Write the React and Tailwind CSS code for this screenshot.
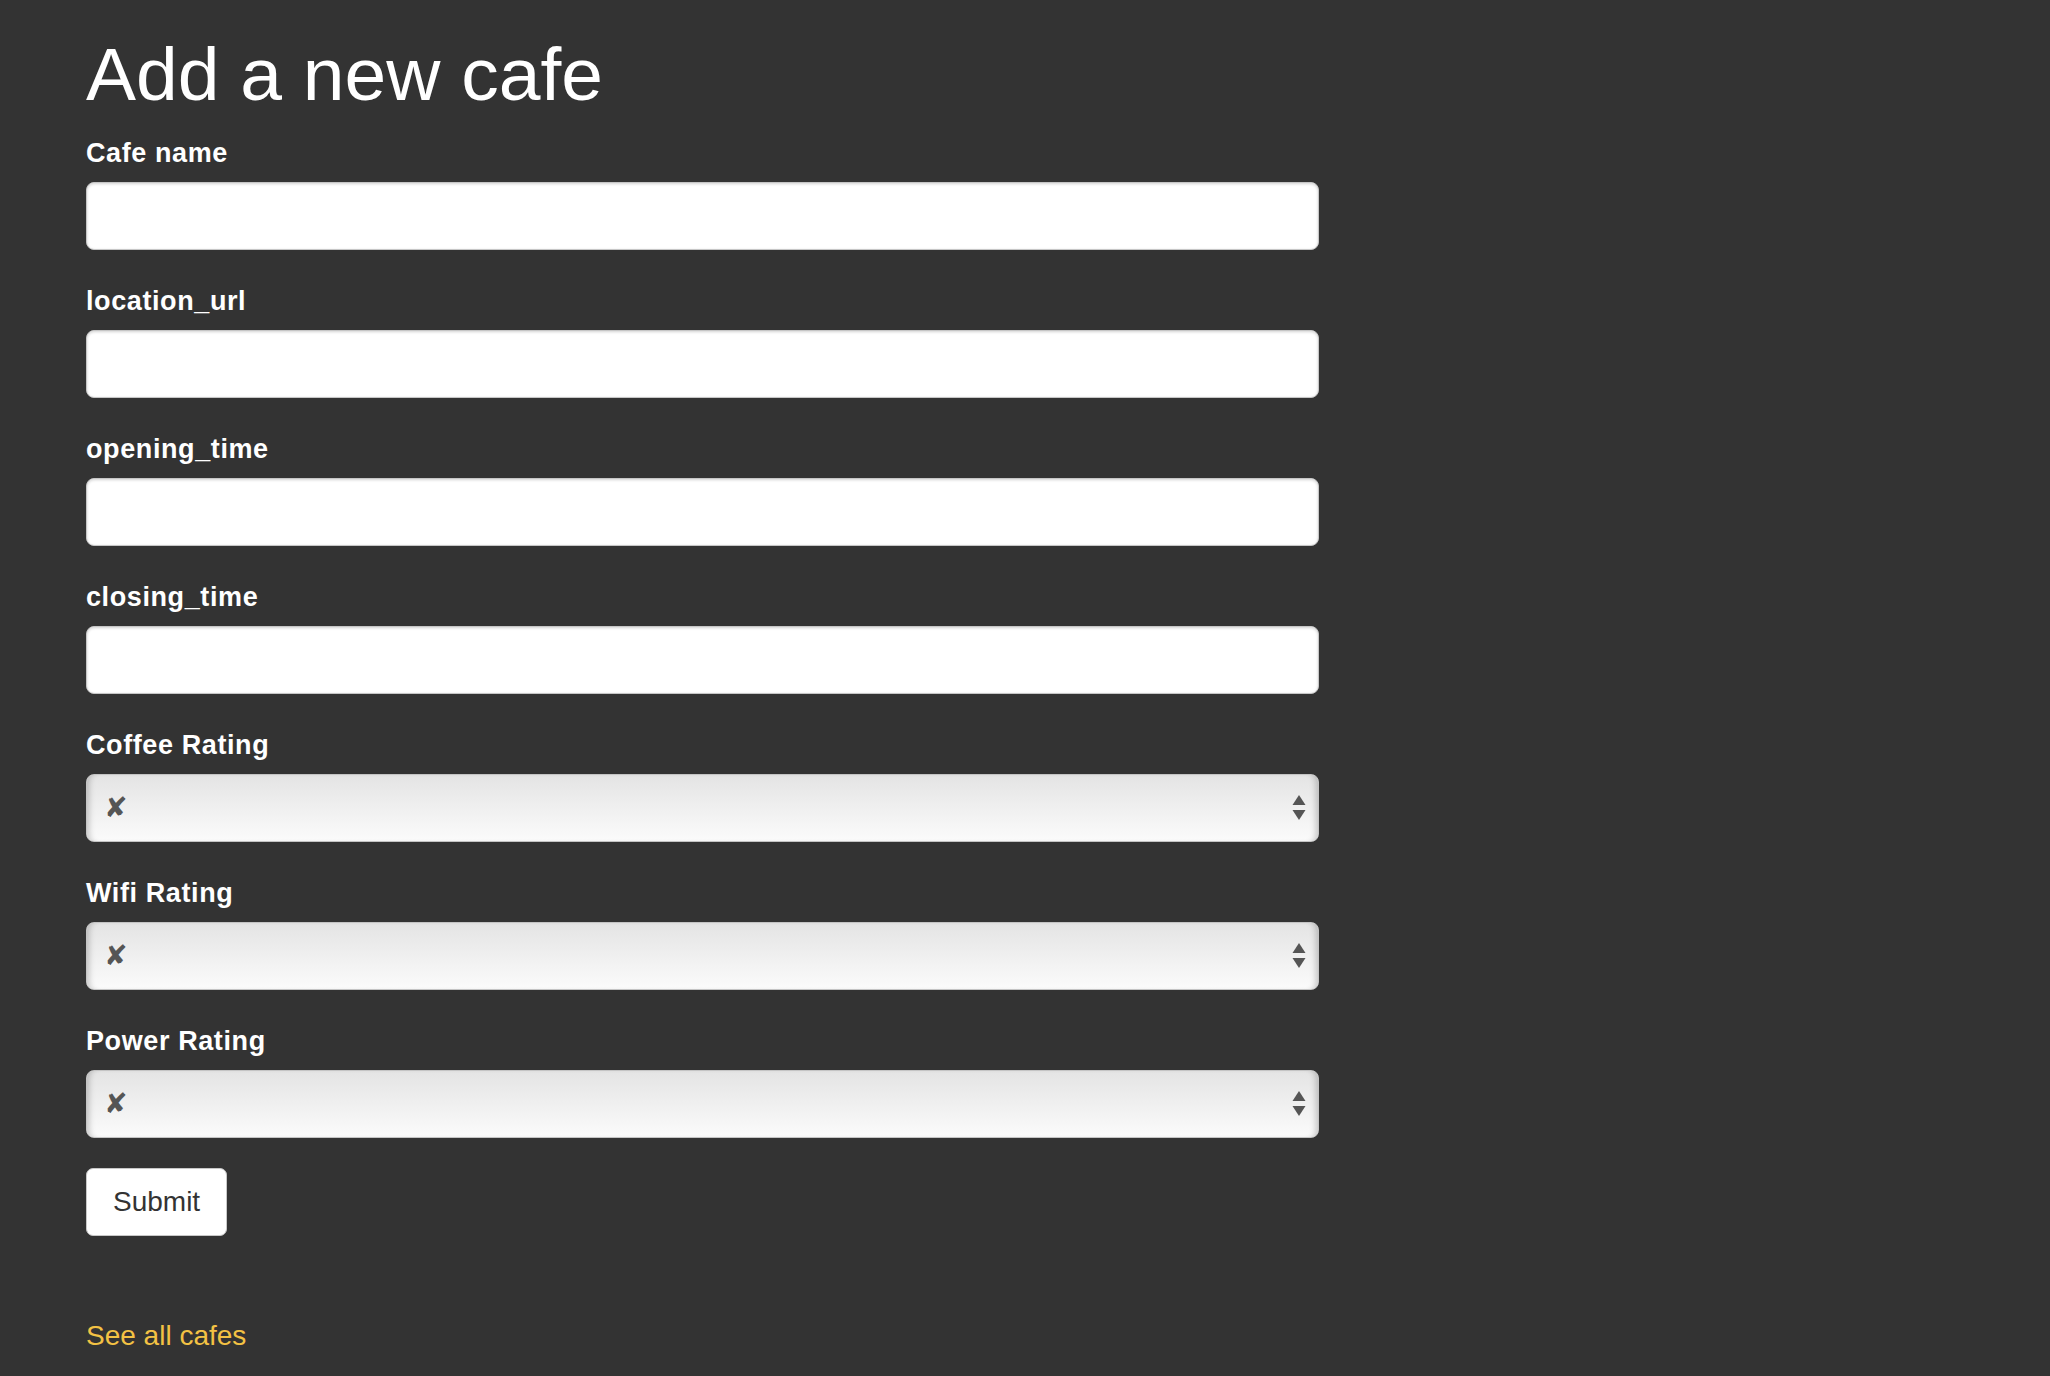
import React, { useState } from 'react';

const textFields = [
  { name: 'cafe', label: 'Cafe name' },
  { name: 'location_url', label: 'location_url' },
  { name: 'opening_time', label: 'opening_time' },
  { name: 'closing_time', label: 'closing_time' },
];

const ratingFields = [
  { name: 'coffee_rating', label: 'Coffee Rating' },
  { name: 'wifi_rating', label: 'Wifi Rating' },
  { name: 'power_rating', label: 'Power Rating' },
];

const ratingOptions = ['✘', '☕', '☕☕', '☕☕☕', '☕☕☕☕', '☕☕☕☕☕'];

const App = () => {
  const [formData, setFormData] = useState({
    cafe: '',
    location_url: '',
    opening_time: '',
    closing_time: '',
    coffee_rating: '✘',
    wifi_rating: '✘',
    power_rating: '✘',
  });

  // Manejar cambios en los campos
  const handleChange = (e) => {
    const { name, value } = e.target;
    setFormData({ ...formData, [name]: value });
  };

  return (
    <div
      className="min-h-screen bg-[#333333] pl-[86px] pt-[32px] pb-[18px] text-white"
      style={{ fontFamily: '"Liberation Sans", Arial, sans-serif' }}
    >
      <h1 className="text-[75px] leading-[84px] font-normal">Add a new cafe</h1>

      <form className="mt-[22px] w-[1233px]" onSubmit={(e) => e.preventDefault()}>
        <div className="flex flex-col gap-[36px]">
          {/* Campos de texto */}
          {textFields.map((field) => (
            <div key={field.name}>
              <label htmlFor={field.name} className="block text-[27px] leading-[30px] font-bold tracking-[0.6px] mb-[14px]">
                {field.label}
              </label>
              <input
                type="text"
                id={field.name}
                name={field.name}
                value={formData[field.name]}
                onChange={handleChange}
                className="block w-full h-[68px] rounded-[8px] border border-[#c6c6c6] bg-white px-4 text-[26px] text-[#333] shadow-[inset_0_1px_3px_rgba(0,0,0,0.18)] outline-none"
              />
            </div>
          ))}

          {/* Valoraciones */}
          {ratingFields.map((field) => (
            <div key={field.name}>
              <label htmlFor={field.name} className="block text-[27px] leading-[30px] font-bold tracking-[0.6px] mb-[14px]">
                {field.label}
              </label>
              <div className="relative">
                <select
                  id={field.name}
                  name={field.name}
                  value={formData[field.name]}
                  onChange={handleChange}
                  className="block w-full h-[68px] appearance-none rounded-[8px] border border-[#c4c4c4] bg-gradient-to-b from-[#e4e4e4] to-[#fbfbfb] pl-[17px] text-[28px] text-[#555] shadow-[inset_7px_0_6px_-5px_rgba(0,0,0,0.22),inset_-7px_0_6px_-5px_rgba(0,0,0,0.22)] outline-none"
                  style={{ fontFamily: '"DejaVu Sans", sans-serif' }}
                >
                  {ratingOptions.map((opt) => (
                    <option key={opt} value={opt}>{opt}</option>
                  ))}
                </select>
                <svg
                  className="pointer-events-none absolute right-[13px] top-1/2 -translate-y-1/2"
                  width="14"
                  height="26"
                  viewBox="0 0 14 26"
                  fill="#555"
                >
                  <path d="M7 0 L13.5 10 L0.5 10 Z" />
                  <path d="M0.5 15 L13.5 15 L7 25 Z" />
                </svg>
              </div>
            </div>
          ))}
        </div>

        <button
          type="submit"
          className="mt-[30px] h-[68px] rounded-[7px] border border-[#c8c8c8] bg-white px-[26px] text-[28px] text-[#333]"
        >
          Submit
        </button>
      </form>

      <a href="#" className="mt-[84px] block w-fit text-[28px] leading-[32px] text-[#f3c244]">
        See all cafes
      </a>
    </div>
  );
};

export default App;
